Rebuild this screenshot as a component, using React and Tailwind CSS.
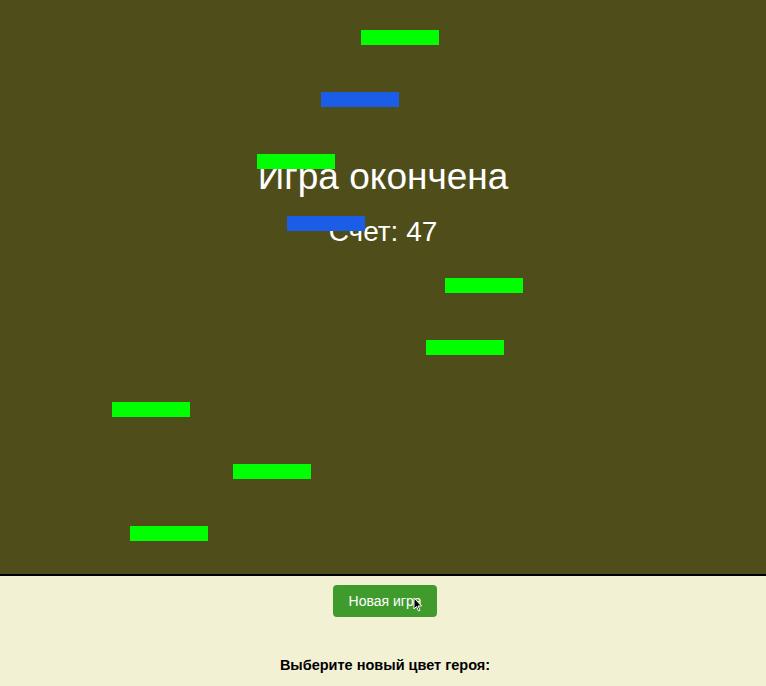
import React from "react";

const platforms = [
  { x: 361, y: 30, color: "bg-[#00ff00]" },
  { x: 321, y: 92, color: "bg-[#1b5de6]" },
  { x: 257, y: 154, color: "bg-[#00ff00]" },
  { x: 287, y: 216, color: "bg-[#1b5de6]" },
  { x: 445, y: 278, color: "bg-[#00ff00]" },
  { x: 426, y: 340, color: "bg-[#00ff00]" },
  { x: 112, y: 402, color: "bg-[#00ff00]" },
  { x: 233, y: 464, color: "bg-[#00ff00]" },
  { x: 130, y: 526, color: "bg-[#00ff00]" },
];

const App = () => {
  return (
    <div className="min-h-screen bg-[#f3f1d4] font-['Liberation_Sans',Arial,sans-serif]">
      {/* game field */}
      <div className="relative h-[576px] border-b-2 border-black bg-[#4f4e1b] overflow-hidden">
        <div className="flex flex-col items-center pt-[158px] text-white">
          <h1 className="text-[37px] leading-none">Игра окончена</h1>
          <p className="mt-[23px] text-[28px] leading-none">Счет: 47</p>
        </div>
        {platforms.map((p, i) => (
          <div
            key={i}
            className={`absolute w-[78px] h-[15px] ${p.color}`}
            style={{ left: p.x, top: p.y }}
          />
        ))}
      </div>

      <div className="flex flex-col items-center pl-[4px]">
        <div className="relative mt-[9px]">
          <button className="w-[104px] h-[32px] rounded bg-[#3f9c2c] text-white text-[14px]">
            Новая игра
          </button>
          <svg
            className="absolute left-[80px] top-[12px]"
            width="10"
            height="15"
            viewBox="0 0 10 15"
          >
            <path
              d="M1 1 L1 12 L3.5 9.5 L5.5 14 L7 13.3 L5 9 L8.5 9 Z"
              fill="#000"
              stroke="#fff"
              strokeWidth="1"
            />
          </svg>
        </div>
        <p className="mt-[38px] text-[14.5px] font-bold text-black">
          Выберите новый цвет героя:
        </p>
      </div>
    </div>
  );
};

export default App;
